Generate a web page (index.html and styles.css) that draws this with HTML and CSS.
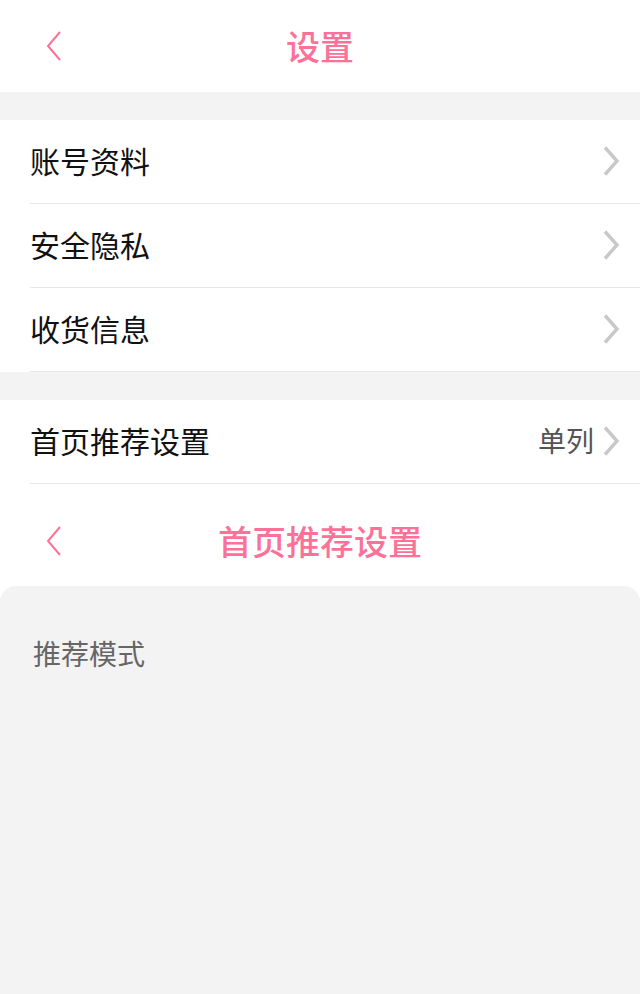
FILE: index.html
```html
<!DOCTYPE html>
<html lang="zh">
<head>
<meta charset="utf-8">
<link rel="stylesheet" href="styles.css">
</head>
<body>
<header class="nav">
  <svg class="back" width="20" height="32" viewBox="0 0 20 32"><path d="M17 2 L5 16 L17 30" fill="none" stroke="#fd7198" stroke-width="2"/></svg>
  <h1 class="title">设置</h1>
</header>
<div class="gap"></div>
<section class="group">
  <div class="row"><span class="label">账号资料</span><span class="right"><svg class="chev" width="20" height="32" viewBox="0 0 20 32"><path d="M3 2.5 L15 16 L3 29.5" fill="none" stroke="#c8c8c8" stroke-width="3.4"/></svg></span></div>
  <div class="row"><span class="label">安全隐私</span><span class="right"><svg class="chev" width="20" height="32" viewBox="0 0 20 32"><path d="M3 2.5 L15 16 L3 29.5" fill="none" stroke="#c8c8c8" stroke-width="3.4"/></svg></span></div>
  <div class="row"><span class="label">收货信息</span><span class="right"><svg class="chev" width="20" height="32" viewBox="0 0 20 32"><path d="M3 2.5 L15 16 L3 29.5" fill="none" stroke="#c8c8c8" stroke-width="3.4"/></svg></span></div>
</section>
<div class="gap"></div>
<section class="group">
  <div class="row"><span class="label">首页推荐设置</span><span class="right"><span class="value">单列</span><svg class="chev" width="20" height="32" viewBox="0 0 20 32"><path d="M3 2.5 L15 16 L3 29.5" fill="none" stroke="#c8c8c8" stroke-width="3.4"/></svg></span></div>
</section>
<header class="nav nav2">
  <svg class="back" width="20" height="32" viewBox="0 0 20 32"><path d="M17 2 L5 16 L17 30" fill="none" stroke="#fd7198" stroke-width="2"/></svg>
  <h1 class="title">首页推荐设置</h1>
</header>
<section class="panel">
  <div class="panel-label">推荐模式</div>
</section>
</body>
</html>
```
FILE: styles.css
```css
html, body {
  margin: 0;
  padding: 0;
  background: #ffffff;
  font-family: "Noto Sans CJK SC", "Noto Sans", sans-serif;
}
body {
  width: 640px;
  height: 994px;
  overflow: hidden;
  display: flex;
  flex-direction: column;
}
.nav {
  height: 92px;
  display: flex;
  align-items: center;
  justify-content: center;
  position: relative;
  background: #fff;
  flex-shrink: 0;
}
.nav2 {
  height: 102px;
  padding-top: 12px;
  box-sizing: border-box;
}
.back {
  position: absolute;
  left: 43px;
  top: 50%;
  margin-top: -16px;
}
.nav2 .back {
  margin-top: -10px;
}
.title {
  margin: 0;
  font-size: 34px;
  font-weight: 500;
  color: #fd7198;
  line-height: 1;
}
.gap {
  height: 28px;
  background: #f3f3f3;
  flex-shrink: 0;
}
.group {
  padding-left: 30px;
  background: #fff;
  flex-shrink: 0;
}
.row {
  height: 84px;
  box-sizing: border-box;
  border-bottom: 1px solid #e6e6e6;
  display: flex;
  align-items: center;
  justify-content: space-between;
  padding-right: 18px;
  padding-bottom: 4px;
}
.label {
  font-size: 30px;
  color: #111;
  line-height: 40px;
}
.right {
  display: flex;
  align-items: center;
  gap: 8px;
  margin-top: 3px;
}
.value {
  font-size: 28px;
  color: #555;
  line-height: 40px;
  margin-top: -3px;
}
.chev {
  display: block;
}
.panel {
  flex: 1;
  background: #f3f3f3;
  border-radius: 16px 16px 0 0;
  padding: 47px 33px 0;
}
.panel-label {
  font-size: 28px;
  color: #666;
  line-height: 40px;
}
```
